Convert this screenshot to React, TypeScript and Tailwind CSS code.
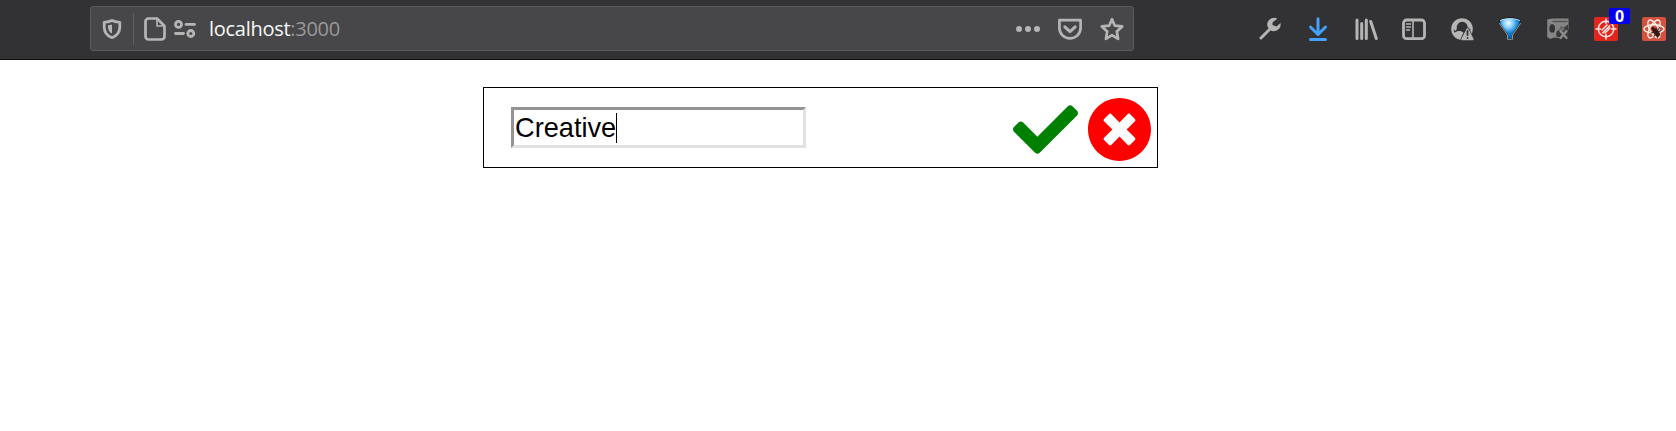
import type { ReactNode } from 'react';
import { FaCheck, FaTimesCircle } from 'react-icons/fa';

function Icon({ children, className = 'text-[#b5b5b6]' }: { children: ReactNode; className?: string }) {
  return (
    <svg viewBox="0 0 24 24" fill="none" stroke="currentColor" strokeWidth="3" strokeLinecap="round" strokeLinejoin="round" className={`h-6 w-6 shrink-0 ${className}`}>
      {children}
    </svg>
  );
}

function AddressBar() {
  return (
    <div className="flex h-[45px] w-[1044px] shrink-0 items-center rounded-[3px] border border-[#5b5b5d] bg-[#474749] px-[9px]">
      <Icon>
        <path d="M12 3.4C9.8 4.5 7 5 4.2 5.3V10c0 5.5 3.5 9 7.8 10.700C16.300 19 19.800 15.500 19.800 10V5.300C17 5 14.200 4.500 12 3.400Z" strokeWidth="2.8" />
        <path d="M12 7.4v9.200c-2.600-1.300-4-3.700-4-6.800V8.300c1.500-.1 2.900-.4 4-.9Z" fill="currentColor" stroke="none" />
      </Icon>
      <span className="ml-[9px] h-8 w-px bg-[#606062]" />
      <Icon className="ml-[9px] text-[#b5b5b6]">
        <path d="M14 1.500H5.500a3 3 0 0 0-3 3v15a3 3 0 0 0 3 3h13a3 3 0 0 0 3-3V9L14 1.500Z" strokeWidth="2.7" />
        <path d="M14 2v7h7" strokeWidth="1.6" />
      </Icon>
      <Icon className="ml-[6px] text-[#b5b5b6]">
        <circle cx="5.5" cy="7.4" r="3" strokeWidth="2.8" />
        <path d="M13 7.400h8.500M2.500 16.500h8" strokeWidth="2.8" />
        <circle cx="17.8" cy="16.5" r="3" strokeWidth="2.8" />
      </Icon>
      <p className="ml-[12px] pt-px font-['Open_Sans',sans-serif] text-[20px] leading-6 tracking-[-0.28px] whitespace-nowrap text-[#f9f9fa]">
        localhost<span className="text-[#98989a]">:3000</span>
      </p>
      <div className="ml-auto flex gap-[18px]">
        <Icon>
          <circle cx="3" cy="12" r="3" fill="currentColor" stroke="none" />
          <circle cx="12" cy="12" r="3" fill="currentColor" stroke="none" />
          <circle cx="21" cy="12" r="3" fill="currentColor" stroke="none" />
        </Icon>
        <Icon>
          <path d="M1.400 3.200h21.200v7.900a10.600 10.300 0 0 1-21.200 0Z" strokeWidth="2.7" />
          <path d="m6.800 9.800 5.200 4.800 5.200-4.800" />
        </Icon>
        <Icon>
          <path d="m12 2.200 2.800 6.500 7.400.7-5.400 5.100 1.300 7.300-6.100-3.700-6.100 3.700 1.300-7.300-5.400-5.100 7.400-.7Z" strokeWidth="2.7" />
        </Icon>
      </div>
    </div>
  );
}

function ToolbarButtons() {
  return (
    <div className="ml-[124px] flex gap-6">
      <Icon>
        <path d="m3 21 10.500-10.500" />
        <path d="M19.400 1.700a6.700 6.700 0 1 0 3.100 4.300l-4 3.400-4-1.400.1-2.700Z" fill="currentColor" stroke="none" />
      </Icon>
      <Icon className="text-[#45a1ff]">
        <path d="M12 1.700v15M4.500 10l7.500 7.500 7.500-7.500M4.500 22.400h15" />
      </Icon>
      <Icon>
        <path d="M3 3v18.500M7.700 6.500v15M12.300 3v18.500M16.700 4.500l5.600 17" strokeWidth="3" />
      </Icon>
      <Icon>
        <rect x="1.5" y="3" width="21" height="18.7" rx="3" strokeWidth="2.8" />
        <path d="M11 3v18" strokeWidth="1.6" />
        <path d="M4.500 7h4M4.500 10h4M4.500 13h3" strokeWidth="1.5" />
      </Icon>
      <Icon>
        <circle cx="12" cy="12" r="9.6" strokeWidth="2.4" />
        <path d="M2.500 11.500C2.500 6 6 2.500 12 2.500s9.500 4 9.500 9l-4.300 1a5.500 5.500 0 1 0-10.400-1l-1 2.500Z" fill="currentColor" stroke="none" />
        <path d="M4 16c2-1.800 4.500-2 6.500-2l3 1.500L11 22c-3.500 0-6-2.500-7-6Z" fill="currentColor" stroke="none" />
        <path d="M17.500 12.200 12.300 22.300h10.300Z" fill="currentColor" stroke="#323234" strokeWidth="3.5" />
        <path d="M17.500 12.200 12.300 22.300h10.300Z" fill="currentColor" strokeWidth="2" />
        <path d="M17.500 14v4M17.500 21v.1" stroke="#323234" strokeWidth="1.8" />
      </Icon>
      <Icon>
        <defs>
          <radialGradient id="funnelBlue" cx="0.42" cy="0.24" r="0.65">
            <stop offset="0" stopColor="#eefaff" />
            <stop offset="0.35" stopColor="#8bd1f8" />
            <stop offset="0.7" stopColor="#1686dc" />
            <stop offset="1" stopColor="#0064b4" />
          </radialGradient>
        </defs>
        <path d="M2 3.300c3-3.200 17-3.200 20 0v3.500L14.500 17.500V22h-5v-4.500L2 6.800Z" fill="url(#funnelBlue)" stroke="#11110f" strokeWidth="1" />
        <path d="M1.500 6.500 9.500 18v4.300h5V18l8-11.500" stroke="#b9b5ad" strokeWidth=".8" />
        <path d="M2.300 3.500c4-2.500 15.400-2.500 19.400 0" stroke="#c2e9ff" strokeWidth=".9" />
      </Icon>
      <Icon className="text-[#858585]">
        <path d="M1.200 2.500 6 1.500h16.500V12l-7 9.500-7-1L4 22l-2.800-2Z" fill="currentColor" stroke="none" />
        <path d="M7 4.500h14" stroke="#565657" strokeWidth="1.4" />
        <ellipse cx="6.2" cy="11.500" rx="2.800" ry="4.300" fill="#343436" stroke="none" />
        <path d="M11 20c-1.500-3-1-6 2-7l2-3.500 3 1 4-3v14Z" fill="#3b3b3d" stroke="none" />
        <path d="M12.500 12.500 17 9l2 3-4 4Z" fill="#6b6b6c" stroke="none" />
        <path d="m14.500 14 6 7m0-7-6 7" stroke="#8e8e8f" strokeWidth="2.2" />
      </Icon>
      <div className="relative h-6 w-6 shrink-0">
        <Icon>
          <rect width="24" height="24" rx="2" fill="#e2251f" stroke="none" />
          <g stroke="#ffe9e5" strokeWidth="1.5">
            <circle cx="12" cy="12" r="7.7" />
            <path d="M12 2v4.500M12 17.500V22M2 12h4.500M17.500 12H22M8 13l5-5M8.800 15.700l6.900-6.900M11 16l5-5" />
          </g>
        </Icon>
        <span className="absolute -top-[9px] left-[15px] flex h-4 w-[21px] items-center justify-center rounded-[2px] bg-[#0000f0] font-['Open_Sans',sans-serif] text-[16px] leading-4 font-bold text-white">
          0
        </span>
      </div>
      <Icon>
        <rect width="24" height="24" rx="2" fill="#d4503f" stroke="none" />
        <g stroke="#fff2e9" strokeWidth="1.4">
          <ellipse cx="12" cy="12" rx="10" ry="4.2" />
          <ellipse cx="12" cy="12" rx="10" ry="4.2" transform="rotate(60 12 12)" />
          <ellipse cx="12" cy="12" rx="10" ry="4.2" transform="rotate(120 12 12)" />
        </g>
        <g stroke="#3a1712" strokeWidth="1">
          <path d="m10.500 13 7.500 5M17.500 10.500 12 19.500M9 16l9.500-2M14 11l1.500 10" />
          <ellipse cx="14.3" cy="15.500" rx="4" ry="2.100" transform="rotate(50 14.3 15.5)" fill="#3a1712" />
          <circle cx="11" cy="11.5" r="1.200" fill="#3a1712" />
        </g>
      </Icon>
    </div>
  );
}

export default function App() {
  return (
    <div className="h-[431px] w-[1676px] overflow-hidden bg-white">
      <header className="flex h-[60px] items-start border-b border-[#0c0c0d] bg-[#323234] pt-[6px] pl-[90px]">
        <AddressBar />
        <div className="pt-[11px]">
          <ToolbarButtons />
        </div>
      </header>
      <main className="mt-[27px] ml-[483px] flex h-[81px] w-[675px] items-center border border-black pr-[5px] pl-[27px]">
        <div className="flex h-[41px] w-[295px] items-center border-3 border-t-[#949494] border-r-[#e2e2e2] border-b-[#e2e2e2] border-l-[#949494] pl-px font-['Liberation_Sans',Arial,sans-serif] text-[27.2px] leading-[30px] text-black">
          <span>Creative</span>
          <span className="h-[30px] w-px bg-black" />
        </div>
        <button aria-label="Save" className="ml-auto pt-[4px]">
          <FaCheck className="h-[65px] w-[65px] text-[#008000]" />
        </button>
        <button aria-label="Cancel" className="ml-[9px] pt-[4px]">
          <FaTimesCircle className="h-[65px] w-[65px] text-[#ff0000]" />
        </button>
      </main>
    </div>
  );
}
